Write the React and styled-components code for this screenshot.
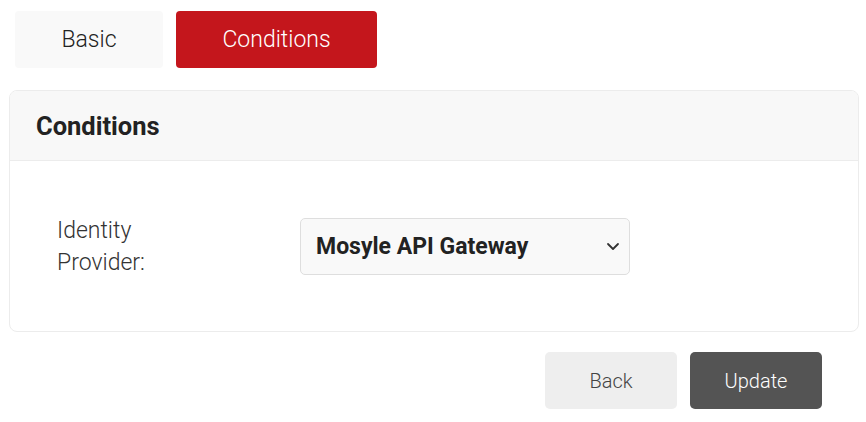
import React, { useState } from "react";
import styled, { createGlobalStyle } from "styled-components";

const GlobalStyle = createGlobalStyle`
  body {
    margin: 0;
    background: #fff;
    font-family: Roboto, "Liberation Sans", sans-serif;
    color: #333;
  }
`;

export default function App() {
  const [active, setActive] = useState(1);
  const tabs = ["Basic", "Conditions"];

  return (
    <Page>
      <GlobalStyle />
      <Tabs>
        {tabs.map((tab, index) => (
          <Tab key={tab} $active={active === index} onClick={() => setActive(index)}>
            {tab}
          </Tab>
        ))}
      </Tabs>
      <Panel>
        <PanelHeader>Conditions</PanelHeader>
        <PanelBody>
          <Label>
            Identity
            <br />
            Provider:
          </Label>
          <SelectBox>
            <span>Mosyle API Gateway</span>
            <svg width="16" height="16" viewBox="0 0 16 16" fill="none">
              <path d="M3 6l5 5 5-5" stroke="#333" strokeWidth="1.8" strokeLinecap="round" strokeLinejoin="round" />
            </svg>
          </SelectBox>
        </PanelBody>
      </Panel>
      <Actions>
        <Button>Back</Button>
        <Button $primary>Update</Button>
      </Actions>
    </Page>
  );
}

const Page = styled.div`
  padding: 11px 7px 0 9px;
  width: 850px;
`;

const Tabs = styled.div`
  display: flex;
  gap: 13px;
  padding-left: 6px;
  margin-bottom: 22px;
`;

const Tab = styled.button`
  height: 57px;
  border: none;
  border-radius: 4px;
  font-family: Roboto, "Liberation Sans", sans-serif;
  font-size: 23px;
  font-weight: 300;
  cursor: pointer;
  width: ${(p) => (p.$active ? "201px" : "148px")};
  background: ${(p) => (p.$active ? "#c4161c" : "#f9f9f9")};
  color: ${(p) => (p.$active ? "#fff" : "#222")};
`;

const Panel = styled.div`
  border: 1px solid #ececec;
  border-radius: 8px;
  overflow: hidden;
`;

const PanelHeader = styled.div`
  height: 69px;
  display: flex;
  align-items: center;
  padding-left: 26px;
  background: #f8f8f8;
  border-bottom: 1px solid #ececec;
  font-size: 25.5px;
  font-weight: 700;
  color: #222;
`;

const PanelBody = styled.div`
  height: 170px;
  display: grid;
  grid-template-columns: 243px 330px;
  align-items: center;
  padding-left: 47px;
`;

const Label = styled.div`
  font-size: 23px;
  font-weight: 300;
  line-height: 32px;
  color: #333;
  margin-top: 2px;
`;

const SelectBox = styled.div`
  height: 57px;
  display: flex;
  align-items: center;
  justify-content: space-between;
  padding: 0 8px 0 15px;
  background: #f9f9f9;
  border: 1px solid #dedede;
  border-radius: 5px;
  font-size: 23px;
  font-weight: 700;
  color: #222;
  box-sizing: border-box;
  width: 330px;
`;

const Actions = styled.div`
  display: flex;
  justify-content: flex-end;
  gap: 13px;
  padding-right: 37px;
  margin-top: 20px;
`;

const Button = styled.button`
  width: 132px;
  height: 57px;
  border: none;
  border-radius: 5px;
  font-family: Roboto, "Liberation Sans", sans-serif;
  font-size: 20px;
  font-weight: 300;
  cursor: pointer;
  background: ${(p) => (p.$primary ? "#545454" : "#eeeeee")};
  color: ${(p) => (p.$primary ? "#fff" : "#444")};
`;
